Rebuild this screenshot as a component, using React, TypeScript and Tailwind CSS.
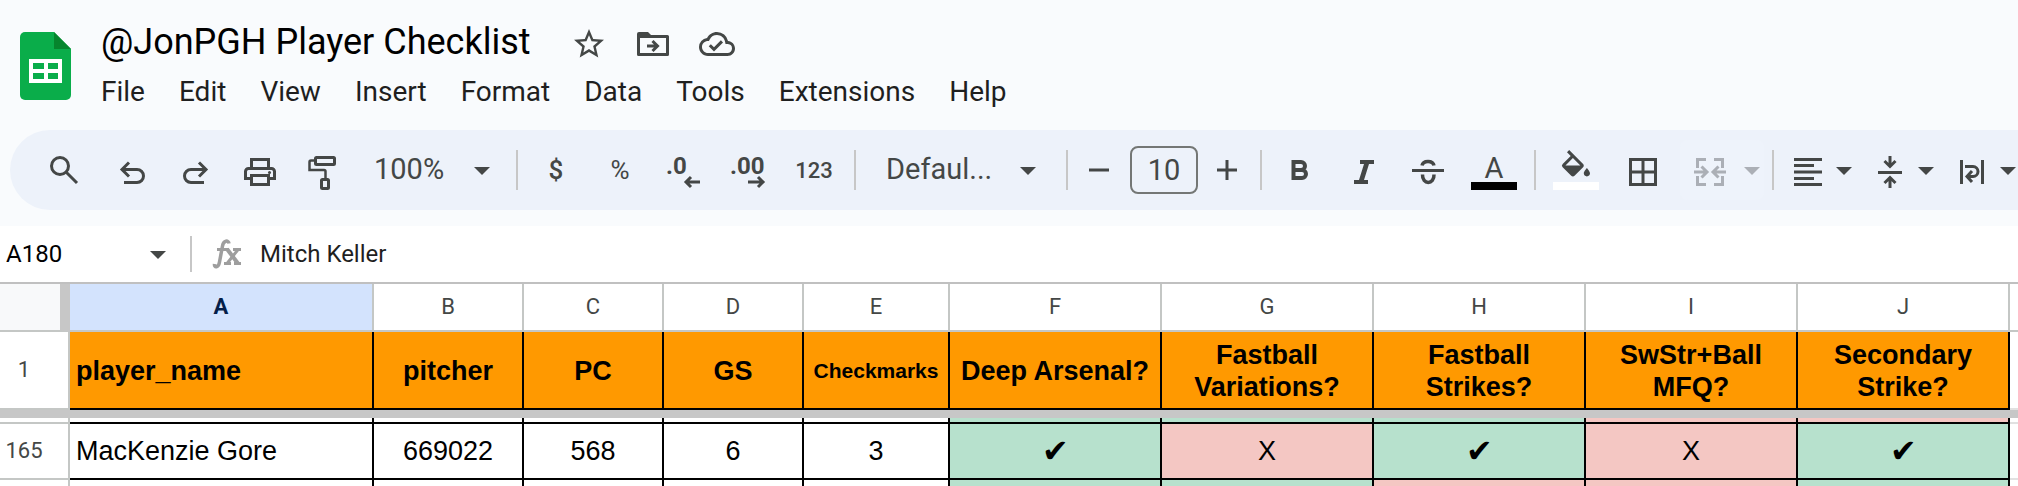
import type { ReactNode } from 'react';
import { MdOutlineCloudDone, MdStarBorder } from 'react-icons/md';

const MENUS = ['File', 'Edit', 'View', 'Insert', 'Format', 'Data', 'Tools', 'Extensions', 'Help'];

const COLUMNS = [
  { letter: 'A', width: 'w-[304px]', title: 'player_name' },
  { letter: 'B', width: 'w-[150px]', title: 'pitcher' },
  { letter: 'C', width: 'w-[140px]', title: 'PC' },
  { letter: 'D', width: 'w-[140px]', title: 'GS' },
  { letter: 'E', width: 'w-[146px]', title: 'Checkmarks' },
  { letter: 'F', width: 'w-[212px]', title: 'Deep Arsenal?' },
  { letter: 'G', width: 'w-[212px]', title: 'Fastball Variations?' },
  { letter: 'H', width: 'w-[212px]', title: 'Fastball Strikes?' },
  { letter: 'I', width: 'w-[212px]', title: 'SwStr+Ball MFQ?' },
  { letter: 'J', width: 'w-[212px]', title: 'Secondary Strike?' },
];

const GREEN = 'bg-[#b7e1cd]';
const RED = 'bg-[#f4c7c3]';

// Rows below the frozen header. The first one is mostly scrolled away.
const ROWS = [
  { id: '', height: 'h-1.5', cells: ['', '', '', '', '', '', '', '', '', ''], fills: [GREEN, GREEN, GREEN, RED, RED] },
  {
    id: '165',
    height: 'h-14',
    cells: ['MacKenzie Gore', '669022', '568', '6', '3', '✔', 'X', '✔', 'X', '✔'],
    fills: [GREEN, RED, GREEN, RED, GREEN],
  },
  { id: '', height: 'h-14', cells: ['', '', '', '', '', '', '', '', '', ''], fills: [GREEN, GREEN, RED, RED, GREEN] },
];

function Glyph({ children, narrow = false }: { children: ReactNode; narrow?: boolean }) {
  return (
    <svg
      className={narrow ? 'h-12 w-8 shrink-0' : 'size-12 shrink-0'}
      viewBox={narrow ? '0 0 32 48' : '0 0 48 48'}
      fill="none"
      stroke="currentColor"
      strokeWidth="3"
      aria-hidden="true"
    >
      {children}
    </svg>
  );
}

function Caret() {
  return (
    <svg className="pointer-events-none mt-0.5 h-2 w-4 shrink-0" viewBox="0 0 16 8" fill="currentColor" aria-hidden="true">
      <path d="M0 0h16L8 8z" />
    </svg>
  );
}

function Separator() {
  return <div className="mx-1.5 h-10 w-0.5 shrink-0 bg-[#c7c7c7]" />;
}

function ToolButton({ label, width = 'w-16', children }: { label: string; width?: string; children: ReactNode }) {
  return (
    <button type="button" aria-label={label} className={`flex h-12 shrink-0 items-center justify-center ${width}`}>
      {children}
    </button>
  );
}

function SplitButton({ label, children }: { label: string; children: ReactNode }) {
  return (
    <button type="button" aria-label={label} className="flex h-12 w-[82px] shrink-0 items-center gap-3 pl-3">
      {children}
      <Caret />
    </button>
  );
}

function SheetsLogo() {
  return (
    <svg className="mt-3 h-[68px] w-[51px] shrink-0" viewBox="0 0 51 68" aria-hidden="true">
      <path d="M5 0H34L51 17V63a5 5 0 0 1-5 5H5a5 5 0 0 1-5-5V5a5 5 0 0 1 5-5z" fill="#0aad4a" />
      <path d="M34 0L51 17H34z" fill="#06852d" />
      <path
        d="M9 27H42V51H9zM13 31V37H24V31zM28 31V37H38V31zM13 41V47H24V41zM28 41V47H38V41z"
        fill="#fff"
        fillRule="evenodd"
      />
    </svg>
  );
}

function Header() {
  return (
    <header className="flex gap-5 pt-5 pb-3.5 pl-5">
      <SheetsLogo />
      <div className="pl-2.5">
        <div className="flex h-12 items-center text-[#444746]">
          <h1 className="pb-1 text-[36px] leading-[44px] whitespace-nowrap text-black">@JonPGH Player Checklist</h1>
          <div className="ml-10 flex items-center gap-7">
            <button type="button" aria-label="Star">
              <MdStarBorder className="size-9" />
            </button>
            <button type="button" aria-label="Move">
              <svg className="size-9" viewBox="0 0 36 36" fill="none" stroke="currentColor" strokeWidth="3" aria-hidden="true">
                <path d="M3.5 10.5H32.5V28.5H3.5z" strokeLinejoin="round" />
                <path d="M2 12V8a2 2 0 0 1 2-2h9l4 4v2z" fill="currentColor" stroke="none" />
                <path d="M12 20H22M17.5 15L22.5 20L17.5 25" />
              </svg>
            </button>
            <button type="button" aria-label="Document status">
              <MdOutlineCloudDone className="size-9" />
            </button>
          </div>
        </div>
        <nav className="flex h-12 items-center gap-[34px] text-[28px] text-[#1f1f1f]">
          {MENUS.map((menu) => (
            <button key={menu} type="button">
              {menu}
            </button>
          ))}
        </nav>
      </div>
    </header>
  );
}

function Toolbar() {
  return (
    <div className="mb-4 ml-2.5 flex h-20 items-center overflow-hidden rounded-l-full bg-[#edf2fa] pl-4.5 text-[29px] text-[#444746]">
      <ToolButton label="Search the menus" width="w-18">
        <Glyph>
          <circle cx="20" cy="20" r="8.5" />
          <path d="M26 26L37 37" />
        </Glyph>
      </ToolButton>
      <ToolButton label="Undo">
        <Glyph>
          <path d="M21 16.5L14 23.5L21 30.5M14 23.5H29a6.5 6.5 0 0 1 0 13H16" />
        </Glyph>
      </ToolButton>
      <ToolButton label="Redo">
        <Glyph>
          <path d="M27 16.5L34 23.5L27 30.5M34 23.5H19a6.5 6.5 0 0 0 0 13H32" />
        </Glyph>
      </ToolButton>
      <ToolButton label="Print">
        <Glyph>
          <path d="M15.5 22V13.5H32.5V22" />
          <path d="M15.5 32.5H9.5V25.5a3 3 0 0 1 3-3H35.5a3 3 0 0 1 3 3V32.5H32.5" />
          <path d="M15.5 29.5H32.5V38.5H15.5z" />
          <circle cx="33.5" cy="26.5" r="1.5" fill="currentColor" stroke="none" />
        </Glyph>
      </ToolButton>
      <ToolButton label="Paint format">
        <Glyph>
          <rect x="15.5" y="11.5" width="19" height="7" rx="1" />
          <path d="M15 14.5H11a1.5 1.5 0 0 0-1.5 1.5V24H24a1.5 1.5 0 0 1 1.5 1.5V33" strokeWidth="2.5" />
          <rect x="21.5" y="33.5" width="7" height="9" rx="1" />
        </Glyph>
      </ToolButton>
      <label className="flex w-[154px] shrink-0 items-center pr-5">
        <select aria-label="Zoom" className="min-w-0 flex-1 appearance-none bg-transparent pl-4.5">
          <option>100%</option>
        </select>
        <Caret />
      </label>
      <Separator />
      <ToolButton label="Format as currency">
        <span className="text-[26px] font-medium">$</span>
      </ToolButton>
      <ToolButton label="Format as percent">
        <span className="text-[26px]">%</span>
      </ToolButton>
      <ToolButton label="Decrease decimal places">
        <Glyph>
          <text x="6" y="28" className="text-[24px] font-bold" fill="currentColor" stroke="none">
            .0
          </text>
          <path d="M27 36H40M31 31L26 36L31 41" />
        </Glyph>
      </ToolButton>
      <ToolButton label="Increase decimal places">
        <Glyph>
          <text x="6" y="28" className="text-[24px] font-bold" fill="currentColor" stroke="none">
            .00
          </text>
          <path d="M24 36H38M34 31L39 36L34 41" />
        </Glyph>
      </ToolButton>
      <ToolButton label="More formats" width="w-17">
        <span className="text-[22px] font-medium">123</span>
      </ToolButton>
      <Separator />
      <label className="flex w-[198px] shrink-0 items-center pr-6">
        <select aria-label="Font" className="min-w-0 flex-1 appearance-none bg-transparent pl-6">
          <option>Defaul...</option>
        </select>
        <Caret />
      </label>
      <Separator />
      <ToolButton label="Decrease font size" width="w-[50px]">
        <Glyph>
          <path d="M14 24H34" />
        </Glyph>
      </ToolButton>
      <input
        aria-label="Font size"
        defaultValue="10"
        className="mr-1 ml-1.5 h-12 w-17 shrink-0 rounded-lg border-2 border-[#747775] bg-transparent text-center"
      />
      <ToolButton label="Increase font size" width="w-[50px]">
        <Glyph>
          <path d="M14 24H34M24 14V34" />
        </Glyph>
      </ToolButton>
      <div className="w-0.5 shrink-0" />
      <Separator />
      <ToolButton label="Bold">
        <Glyph>
          <path d="M17.5 16H25a4 4 0 0 1 0 8H17.5zM17.5 24H26a4 4 0 0 1 0 8H17.5z" strokeWidth="4" />
        </Glyph>
      </ToolButton>
      <ToolButton label="Italic">
        <Glyph>
          <path d="M20 14h14v4h-5l-5 16h4v4H14v-4h5l5-16h-4z" fill="currentColor" stroke="none" />
        </Glyph>
      </ToolButton>
      <ToolButton label="Strikethrough">
        <Glyph>
          <path d="M8 24.5H40" />
          <path d="M18 19.5C19 14 29 14 30 19.5M18.5 28.5C18 39 30.5 39 30 28.5" strokeWidth="3.5" />
        </Glyph>
      </ToolButton>
      <ToolButton label="Text color" width="w-17">
        <span className="flex h-12 w-[46px] flex-col items-center justify-end pb-1">
          <span className="leading-7">A</span>
          <span className="h-2 w-full bg-black" />
        </span>
      </ToolButton>
      <Separator />
      <ToolButton label="Fill color" width="w-17">
        <span className="flex h-12 w-[46px] flex-col items-center justify-end pb-1">
          <svg className="mb-1 h-7 w-8 shrink-0" viewBox="2 0 20 18" fill="currentColor" aria-hidden="true">
            <path d="M16.56 8.94 7.62 0 6.21 1.41l2.38 2.38-5.15 5.15a1.49 1.49 0 0 0 0 2.12l5.5 5.5c.29.29.68.44 1.06.44s.77-.15 1.06-.44l5.5-5.5c.59-.58.59-1.53 0-2.12zM5.21 10 10 5.21 14.79 10H5.21zM19 11.5s-2 2.17-2 3.5c0 1.1.9 2 2 2s2-.9 2-2c0-1.33-2-3.5-2-3.5z" />
          </svg>
          <span className="h-2 w-full bg-white" />
        </span>
      </ToolButton>
      <ToolButton label="Borders">
        <Glyph>
          <path d="M12.5 13.5H37.5V38.5H12.5zM25 13V39M12 26H38" />
        </Glyph>
      </ToolButton>
      <button
        type="button"
        disabled
        aria-label="Merge cells"
        className="mr-0.5 ml-1.5 flex h-15 w-21 shrink-0 items-center gap-4.5 rounded-lg bg-[#eef3fb] pl-3.5 text-[#abafb6]"
      >
        <Glyph narrow>
          <path d="M12 13.5H3.5V22M12 38.5H3.5V30M20 13.5H28.5V22M20 38.5H28.5V30" />
          <path d="M0 26H12M7.5 20.5L13 26L7.5 31.5M32 26H20M24.5 20.5L19 26L24.5 31.5" />
        </Glyph>
        <Caret />
      </button>
      <Separator />
      <SplitButton label="Horizontal align">
        <Glyph narrow>
          <path d="M2 13.5H30M2 19.5H22M2 26H30M2 32.5H22M2 38.5H30" />
        </Glyph>
      </SplitButton>
      <SplitButton label="Vertical align">
        <Glyph narrow>
          <path d="M4 26.5H28M16 10V20M10.5 15L16 20.5L21.5 15M16 42V32M10.5 37L16 31.5L21.5 37" />
        </Glyph>
      </SplitButton>
      <SplitButton label="Text wrapping">
        <Glyph narrow>
          <path d="M5.5 14V38M26.5 14V38M9 20.5H17a5 5 0 0 1 0 10H12M16 25L11 30.5L16 36" />
        </Glyph>
      </SplitButton>
    </div>
  );
}

function FormulaBar() {
  return (
    <div className="flex h-14 shrink-0 items-center bg-white text-[24px] text-[#1f1f1f]">
      <label className="flex w-[190px] items-center pr-6 pl-1.5 text-[#444746]">
        <input aria-label="Name box" defaultValue="A180" className="min-w-0 flex-1 bg-transparent text-black" />
        <Caret />
      </label>
      <div className="h-9 w-0.5 bg-[#c7c7c7]" />
      <svg className="ml-5 h-[34px] w-8" viewBox="0 0 32 34" fill="none" stroke="#9e9e9e" strokeWidth="3" aria-hidden="true">
        <path d="M17 6.5C16.5 3 11.5 3 10.5 9L7.5 25C6.5 31 2 31 2.5 27" strokeWidth="3.5" />
        <path d="M5 12.5H17M21 12.5H29M12 26.5H19M22 26.5H29M26.5 12L15 26.5" />
        <path d="M15 12L26 26.5" strokeWidth="4" />
      </svg>
      <input aria-label="Formula" defaultValue="Mitch Keller" className="ml-4 min-w-0 flex-1 bg-transparent" />
    </div>
  );
}

function Grid() {
  return (
    <div className="min-h-0 flex-1 overflow-hidden border-t-2 border-[#c0c0c0] bg-white">
      <table className="w-full table-fixed border-separate border-spacing-0 font-['Liberation_Sans',Arial,sans-serif] text-[27px] leading-8 text-black">
        <thead>
          <tr className="h-12 font-['Roboto',sans-serif] text-[22px] text-[#444746]">
            <td className="w-[70px] border-r-10 border-b-2 border-r-[#c7c7c7] border-b-[#c4c7c5] bg-[#f8f9fa] p-0" />
            {COLUMNS.map(({ letter, width }) => (
              <th
                key={letter}
                scope="col"
                className={`border-r-2 border-b-2 border-[#c4c7c5] p-0 ${width} ${
                  letter === 'A' ? 'bg-[#d3e3fd] font-bold text-[#041e49]' : 'font-normal'
                }`}
              >
                {letter}
              </th>
            ))}
            <td className="border-b-2 border-[#c4c7c5] p-0" />
          </tr>
          <tr className="h-[78px]">
            <th
              scope="row"
              className="border-r-2 border-b-2 border-[#c4c7c5] p-0 pr-5 font-['Roboto',sans-serif] text-[22px] font-normal text-[#444746]"
            >
              1
            </th>
            {COLUMNS.map(({ letter, title }) => (
              <th
                key={letter}
                className={`border-r-2 border-b-2 border-black bg-[#ff9900] pt-0.5 pb-0 ${
                  letter === 'A' ? 'px-1.5 text-left' : letter === 'E' ? 'px-0 text-[21px]' : 'px-1.5'
                }`}
              >
                {title}
              </th>
            ))}
            <td className="border-b-2 border-[#e1e1e1] p-0" />
          </tr>
          {/* Frozen row divider */}
          <tr className="h-2">
            <td colSpan={12} className="bg-[#c7c7c7] p-0" />
          </tr>
        </thead>
        <tbody>
          {ROWS.map(({ id, height, cells, fills }, row) => (
            <tr key={row} className={height}>
              <th
                scope="row"
                className="border-r-2 border-b-2 border-[#c4c7c5] p-0 pr-5 font-['Roboto',sans-serif] text-[22px] font-normal text-[#444746]"
              >
                {id}
              </th>
              {cells.map((cell, i) => (
                <td
                  key={i}
                  className={`border-r-2 border-b-2 border-black py-0 ${i === 0 ? 'px-1.5' : 'px-0 text-center'} ${
                    i > 4 ? fills[i - 5] : ''
                  } ${cell === '✔' ? 'text-[32px]' : ''}`}
                >
                  {cell}
                </td>
              ))}
              <td className="border-b-2 border-[#e1e1e1] p-0" />
            </tr>
          ))}
        </tbody>
      </table>
    </div>
  );
}

export default function App() {
  return (
    <div className="flex h-screen flex-col overflow-hidden bg-[#f9fbfd] font-['Roboto',sans-serif]">
      <Header />
      <Toolbar />
      <FormulaBar />
      <Grid />
    </div>
  );
}
